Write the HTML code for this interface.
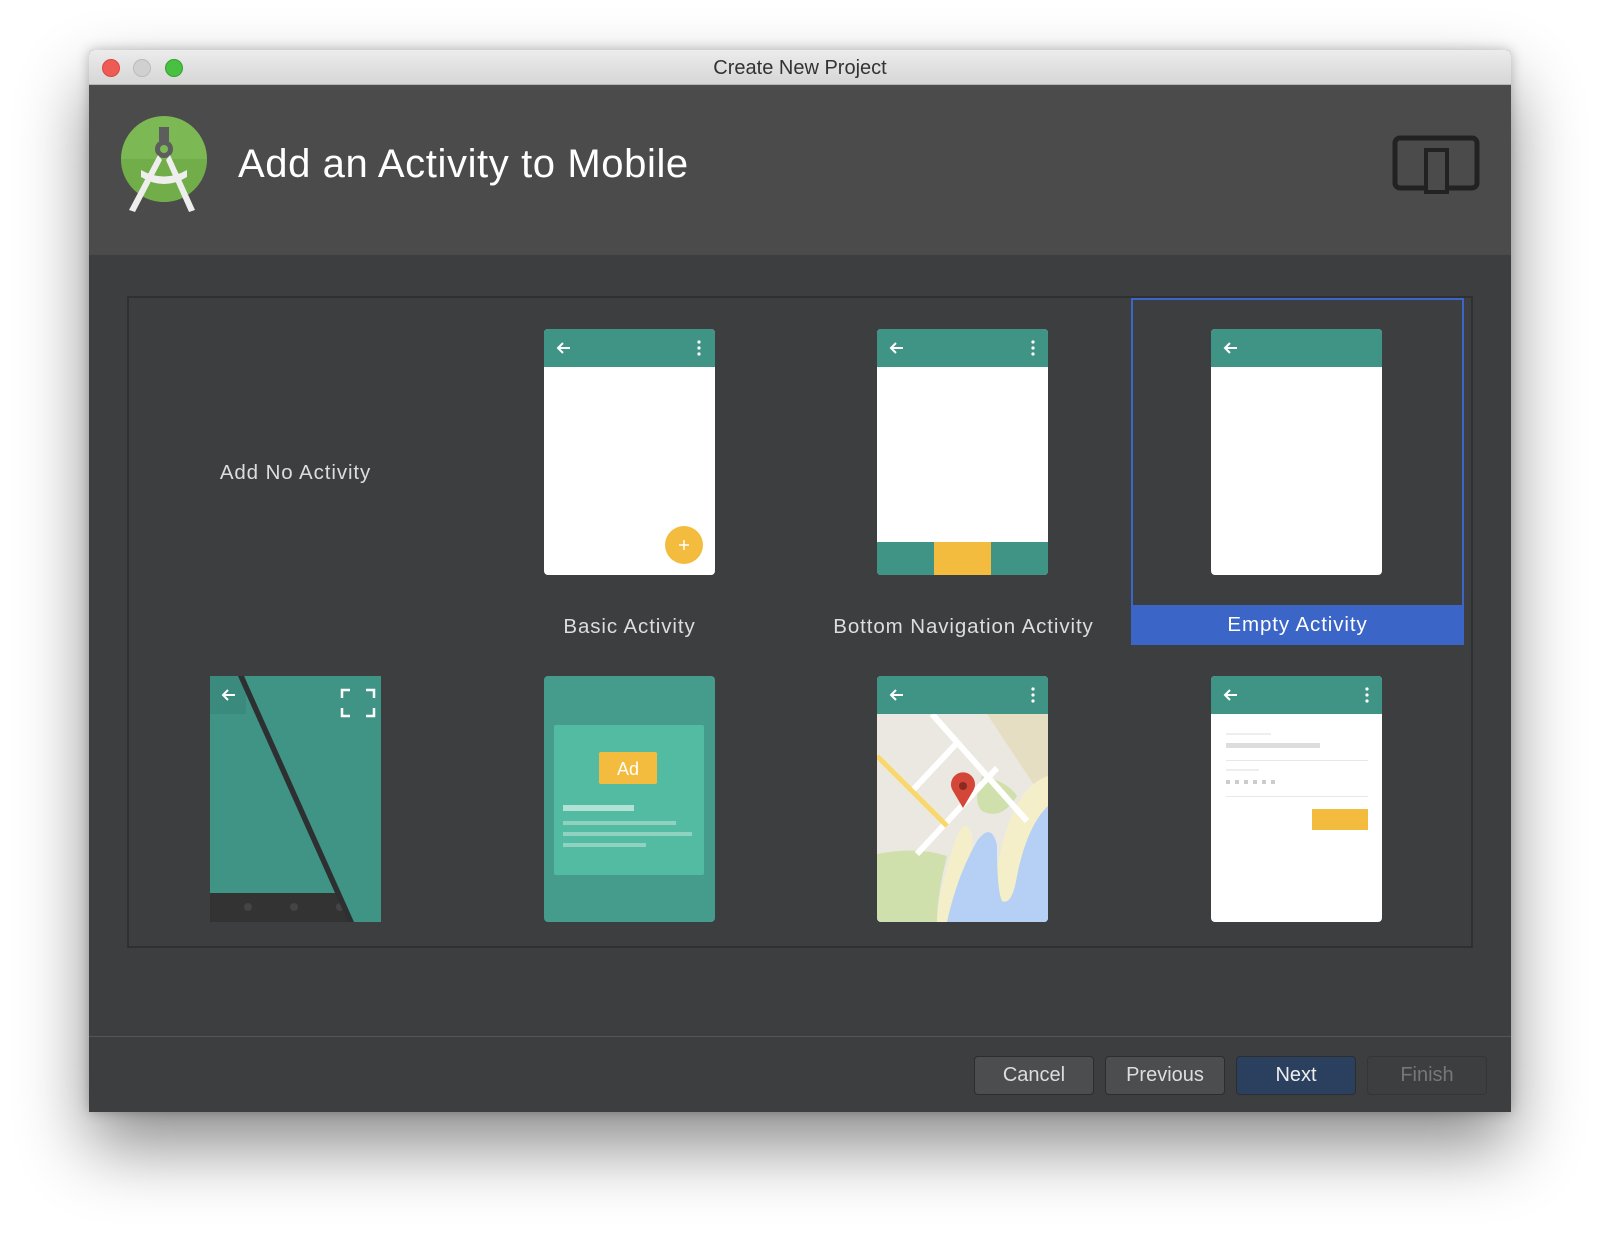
<!DOCTYPE html>
<html><head><meta charset="utf-8"><style>
*{margin:0;padding:0;box-sizing:border-box}
body{width:1600px;height:1239px;background:#fff;position:relative;overflow:hidden;font-family:"Liberation Sans",sans-serif}
.win{position:absolute;left:89px;top:50px;width:1422px;height:1062px;background:#3d3e40;box-shadow:0 35px 70px rgba(0,0,0,.45),0 0 12px rgba(0,0,0,.25);border-radius:5px 5px 0 0;overflow:hidden}
.tb{position:absolute;left:0;top:0;width:100%;height:35px;background:linear-gradient(#ececec,#d6d6d6);border-bottom:1px solid #b5b5b5;text-align:center;font-size:20px;line-height:37px;color:#333}
.dot{position:absolute;top:9px;width:18px;height:18px;border-radius:50%}
.hdr{position:absolute;left:0;top:35px;width:100%;height:170px;background:#4b4b4b}
.ttl{position:absolute;left:149px;top:57px;font-size:40px;letter-spacing:0.6px;color:#fff}
.panel{position:absolute;left:38px;top:246px;width:1346px;height:652px;border:2px solid #2f3031}
.card{position:absolute;width:171px;height:246px}
.lbl{position:absolute;font-size:20.5px;letter-spacing:0.9px;color:#ddd;text-align:center;width:333px}
.sel{position:absolute;left:1042px;top:248px;width:333px;height:347px;border:2px solid #3c65c8}
.selbar{position:absolute;left:1042px;top:555px;width:333px;height:40px;background:#3c65c8;color:#fff;font-size:20.5px;letter-spacing:0.9px;text-align:center;line-height:40px}
.foot{position:absolute;left:0;top:986px;width:100%;height:1px;background:#555}
.btn{position:absolute;top:1006px;width:120px;height:39px;border:1px solid #2c2d2e;border-radius:4px;background:#4b4d4f;color:#ddd;font-size:20px;text-align:center;line-height:37px}
</style></head><body>
<div class="win">
<div class="tb">Create New Project
<div class="dot" style="left:13px;background:#ee5b55;border:1px solid #d84841"></div>
<div class="dot" style="left:44px;background:#d0d0d0;border:1px solid #bbb"></div>
<div class="dot" style="left:76px;background:#48c042;border:1px solid #32a22e"></div>
</div>
<div class="hdr">
<svg style="position:absolute;left:30px;top:30px" width="90" height="100" viewBox="0 0 90 100">
<circle cx="45" cy="44" r="43" fill="#7cb854"/>
<path d="M2 44a43 43 0 0 0 86 0z" fill="#71ad49"/>
<rect x="40" y="12" width="10" height="14" fill="#5d5d5d"/>
<circle cx="45" cy="34" r="9" fill="#5d5d5d"/>
<circle cx="45" cy="34" r="4" fill="#7cb854"/>
<path d="M39 40 L10 95 L16 97 L43 45 Z" fill="#eee"/>
<path d="M51 40 L76 95 L70 97 L47 45 Z" fill="#eee"/>
<path d="M22 62 Q45 76 68 62 L68 55 Q45 68 22 55 Z" fill="#eee"/>
</svg>
<div class="ttl">Add an Activity to Mobile</div>
<svg style="position:absolute;left:1303px;top:50px" width="90" height="60" viewBox="0 0 90 60">
<rect x="3" y="3" width="82" height="50" rx="5" fill="none" stroke="#222" stroke-width="5"/>
<rect x="34" y="15" width="21" height="42" fill="#4b4b4b" stroke="#222" stroke-width="4"/>
</svg>
</div>
<div class="panel"></div>
<div class="sel"></div>
<div class="selbar">Empty Activity</div>
<div class="lbl" style="left:40px;top:411px">Add No Activity</div>
<div class="lbl" style="left:374px;top:565px">Basic Activity</div>
<div class="lbl" style="left:708px;top:565px">Bottom Navigation Activity</div>

<svg class="card" style="left:455px;top:279px" viewBox="0 0 171 246">
<rect width="171" height="246" rx="4" fill="#fff"/><path d="M4 0h163a4 4 0 0 1 4 4v34H0V4a4 4 0 0 1 4-4z" fill="#3f9486"/>
<path d="M14 19h12M19 14l-5 5 5 5" stroke="#fff" stroke-width="2" fill="none"/>
<circle cx="155" cy="13" r="1.6" fill="#fff"/><circle cx="155" cy="19" r="1.6" fill="#fff"/><circle cx="155" cy="25" r="1.6" fill="#fff"/>
<circle cx="140" cy="216" r="19" fill="#f3bc3e"/><path d="M140 211v10M135 216h10" stroke="#fff" stroke-width="1.5"/>
</svg>
<svg class="card" style="left:788px;top:279px" viewBox="0 0 171 246">
<rect width="171" height="246" rx="4" fill="#fff"/><path d="M4 0h163a4 4 0 0 1 4 4v34H0V4a4 4 0 0 1 4-4z" fill="#3f9486"/>
<path d="M14 19h12M19 14l-5 5 5 5" stroke="#fff" stroke-width="2" fill="none"/>
<circle cx="156" cy="13" r="1.6" fill="#fff"/><circle cx="156" cy="19" r="1.6" fill="#fff"/><circle cx="156" cy="25" r="1.6" fill="#fff"/>
<path d="M0 213h171v29a4 4 0 0 1-4 4H4a4 4 0 0 1-4-4z" fill="#3f9486"/><rect x="57" y="213" width="57" height="33" fill="#f3bc3e"/>
</svg>
<svg class="card" style="left:1122px;top:279px" viewBox="0 0 171 246">
<rect width="171" height="246" rx="4" fill="#fff"/><path d="M4 0h163a4 4 0 0 1 4 4v34H0V4a4 4 0 0 1 4-4z" fill="#3f9486"/>
<path d="M14 19h12M19 14l-5 5 5 5" stroke="#fff" stroke-width="2" fill="none"/>
</svg>
<svg class="card" style="left:121px;top:626px" viewBox="0 0 171 246">
<rect width="171" height="246" rx="4" fill="#3f9486"/>
<rect x="0" y="0" width="36" height="38" fill="#3a8a7d"/>
<rect x="0" y="217" width="140" height="29" fill="#333"/>
<circle cx="38" cy="231" r="4" fill="#444"/><circle cx="84" cy="231" r="4" fill="#444"/><circle cx="130" cy="231" r="4" fill="#444"/>
<path d="M140 246L171 246L171 0L35 0Z" fill="#3f9486"/>
<path d="M28 0L34 0L144 246L138 246Z" fill="#2e2f30"/>
<path d="M13 19h12M18 14l-5 5 5 5" stroke="#fff" stroke-width="2" fill="none"/>
<path d="M132 22v-8h8M156 14h8v8M164 32v8h-8M140 40h-8v-8" stroke="#fff" stroke-width="2.5" fill="none"/>
</svg>
<svg class="card" style="left:455px;top:626px" viewBox="0 0 171 246">
<rect width="171" height="246" rx="4" fill="#469c8c"/>
<rect x="10" y="49" width="150" height="150" rx="2" fill="#54bba3"/>
<rect x="55" y="76" width="58" height="32" rx="2" fill="#f3bc3e"/>
<text x="84" y="99" font-size="18" fill="#fff" text-anchor="middle" font-family="Liberation Sans">Ad</text>
<rect x="19" y="129" width="71" height="6" fill="#b2e2d6"/>
<rect x="19" y="145" width="113" height="4" fill="#8fd2c2"/>
<rect x="19" y="156" width="129" height="4" fill="#8fd2c2"/>
<rect x="19" y="167" width="83" height="4" fill="#8fd2c2"/>
</svg>
<svg class="card" style="left:788px;top:626px" viewBox="0 0 171 246">
<defs><clipPath id="c"><rect width="171" height="246" rx="4"/></clipPath></defs>
<g clip-path="url(#c)">
<rect width="171" height="246" fill="#ebe8e1"/>
<path d="M55 38H171V130L110 38Z" fill="#e5dec2"/>
<path d="M171 100Q140 110 125 170Q115 215 105 220Q95 200 95 160Q90 140 80 160Q60 220 60 246H171Z" fill="#f5efc9"/>
<path d="M171 130Q150 150 140 200Q135 230 125 225Q120 215 120 170Q115 145 100 165Q80 200 70 246H171Z" fill="#b5cff5"/>
<path d="M0 178Q40 170 70 180Q60 220 60 246H0Z" fill="#cfe0ad"/>
<path d="M105 100Q130 105 140 120Q125 145 105 135Q95 125 105 100Z" fill="#cfe0ad"/>
<path d="M55 38L150 145" stroke="#fff" stroke-width="6"/>
<path d="M120 92L40 178" stroke="#fff" stroke-width="6"/>
<path d="M80 67L35 115" stroke="#fff" stroke-width="6"/>
<path d="M0 80L70 150" stroke="#f8d86a" stroke-width="5"/>
<path d="M86 132L76 115A12 12 0 1 1 96 115Z" fill="#d44638"/><circle cx="86" cy="110" r="4" fill="#8a2a20"/>
<path d="M0 0h171v38H0z" fill="#3f9486"/>
<path d="M14 19h12M19 14l-5 5 5 5" stroke="#fff" stroke-width="2" fill="none"/>
<circle cx="156" cy="13" r="1.6" fill="#fff"/><circle cx="156" cy="19" r="1.6" fill="#fff"/><circle cx="156" cy="25" r="1.6" fill="#fff"/>
</g></svg>
<svg class="card" style="left:1122px;top:626px" viewBox="0 0 171 246">
<rect width="171" height="246" rx="4" fill="#fff"/><path d="M4 0h163a4 4 0 0 1 4 4v34H0V4a4 4 0 0 1 4-4z" fill="#3f9486"/>
<path d="M14 19h12M19 14l-5 5 5 5" stroke="#fff" stroke-width="2" fill="none"/>
<circle cx="156" cy="13" r="1.6" fill="#fff"/><circle cx="156" cy="19" r="1.6" fill="#fff"/><circle cx="156" cy="25" r="1.6" fill="#fff"/>
<rect x="15" y="57" width="45" height="2" fill="#eee"/>
<rect x="15" y="67" width="94" height="5" fill="#ddd"/>
<rect x="15" y="84" width="142" height="1" fill="#e8e8e8"/>
<rect x="15" y="93" width="33" height="2" fill="#eee"/>
<g fill="#ccc"><rect x="15" y="104" width="4" height="4"/><rect x="24" y="104" width="4" height="4"/><rect x="33" y="104" width="4" height="4"/><rect x="42" y="104" width="4" height="4"/><rect x="51" y="104" width="4" height="4"/><rect x="60" y="104" width="4" height="4"/></g>
<rect x="15" y="120" width="142" height="1" fill="#e8e8e8"/>
<rect x="101" y="133" width="56" height="21" fill="#f3bc3e"/>
</svg>

<div class="foot"></div>
<div class="btn" style="left:885px">Cancel</div>
<div class="btn" style="left:1016px">Previous</div>
<div class="btn" style="left:1147px;background:#2b3f5e;color:#eee">Next</div>
<div class="btn" style="left:1278px;background:#3d3e40;border-color:#343536;color:#777">Finish</div>
</div>
</body></html>
